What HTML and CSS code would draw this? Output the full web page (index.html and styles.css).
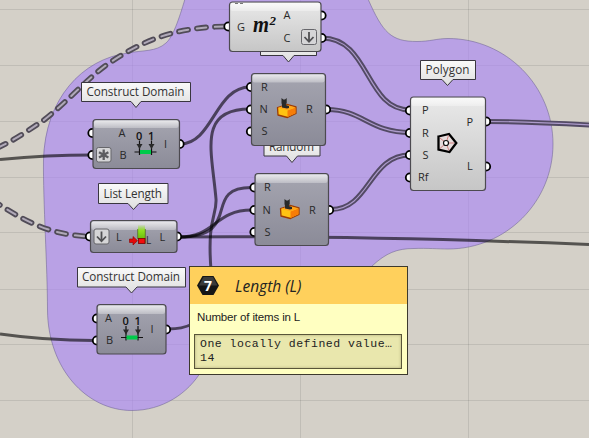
FILE: index.html
```html
<!DOCTYPE html>
<html lang="en">
<head>
<meta charset="utf-8">
<title>Node canvas</title>
<link rel="stylesheet" href="styles.css">
</head>
<body>
<main class="canvas">
<svg class="graph" width="589" height="438" viewBox="0 0 589 438">
  <defs>
    <linearGradient id="dark" x2="0" y2="1">
      <stop offset="0" stop-color="#a5a5b0"/><stop offset="1" stop-color="#8b8b98"/>
    </linearGradient>
    <linearGradient id="light" x2="0" y2="1">
      <stop offset="0" stop-color="#e9e9e9"/><stop offset="1" stop-color="#c6c6c6"/>
    </linearGradient>
    <linearGradient id="shine" x2="0" y2="1">
      <stop offset="0" stop-color="#fff" stop-opacity=".75"/><stop offset="1" stop-color="#fff" stop-opacity=".3"/>
    </linearGradient>
    <linearGradient id="tag" x2="0" y2="1">
      <stop offset="0" stop-color="#fafafa"/><stop offset="1" stop-color="#dedede"/>
    </linearGradient>
    <linearGradient id="bar" x2="0" y2="1">
      <stop offset="0" stop-color="#8fe020" stop-opacity=".1"/><stop offset=".4" stop-color="#8fe020"/><stop offset="1" stop-color="#69bd0c"/>
    </linearGradient>
    <g id="domain">
      <path class="ink" d="M0 21.500H22M5 10V24.500M17 10V24.500"/>
      <rect x="5.500" y="19.500" width="11" height="4" fill="#00cb4a"/>
      <path d="M2 13.500H8L5 18.500ZM14 13.500H20L17 18.500Z"/>
      <text class="digit" x="1.600" y="9">0</text><text class="digit" x="13.600" y="9">1</text>
    </g>
    <g id="dice">
      <path d="M1.500 9.500L11 6.500L20 9V15.500L11.500 19.500L2 17Z" fill="#ffc313" stroke="#9c3b05" stroke-width="1.300" stroke-linejoin="round"/>
      <path d="M11.500 12.500L19.500 9.500V15.200L11.500 18.900Z" fill="#f77d08"/>
      <path d="M2 9.700L11 7L19.500 9.200L11.500 12.200Z" fill="#ffa51a"/>
      <path d="M5.500 0L7.300 1.500H9L10.700 0V5L9.800 7L13 8V10L11 10.500L6 9.500V7L5.500 5Z"/>
    </g>
    <g id="down">
      <rect class="chip" x=".5" y=".5" width="15" height="15" rx="2"/>
      <path class="mark" d="M8 3V12.500M3.500 8L8 12.800L12.500 8"/>
    </g>
  </defs>

  <path class="grid" d="M132.500 0V438M300.500 0V438M468.500 0V438M0 9.500H589M0 65.500H589M0 121.500H589M0 177.500H589M0 232.500H589M0 289.500H589M0 344.500H589M0 400.500H589"/>

  <path class="group" d="M185 -1C179 19 173 37 166 43C156 52 143 50 128 53C82 59 45 99 43.500 160C43 201 47.500 268 47.500 310C48 368 86 410.500 132 410.500C162 410.500 188 394 202 370C228 320 320 320 372 266C386 253 397 248.500 414 248.500C427 248 439 249 448 249C506 249 553 202 553 144C553 86 506 38.500 448 38.500C437 38.500 430 41.500 417 41.500C391 41.500 383 33 368 -1Z"/>

  <g class="chain">
    <path class="chain-out" d="M-3 148C17 139 30 129 44 120C68 101 85 81 105 66C145 38 179 27 226 26.500"/>
    <path class="chain-in" d="M-3 148C17 139 30 129 44 120C68 101 85 81 105 66C145 38 179 27 226 26.500"/>
    <path class="chain-out" d="M-8 200C19 217 45 235 90 236.500"/>
    <path class="chain-in" d="M-8 200C19 217 45 235 90 236.500"/>
  </g>
  <g class="wires">
    <path d="M0 159.500C27 157 58 155 91 155"/>
    <path d="M0 334C28 338 58 340.500 94 340.500"/>
    <path d="M180 144C213 144 215 87 250 87"/>
    <path d="M179 237C245 237 200 187 252 187.500"/>
    <path d="M179 237C216 237 214 210 252 210"/>
    <path d="M179 237C315 236 450 239 589 244.500"/>
    <path d="M250 109C197 109 212 151 216 199C217 216 207 218 211 270"/>
    <path d="M168 329C178 329 184 328 195 323"/>
  </g>
  <g class="double">
    <path class="double-out" d="M322 38C370 38 365 110 410 110"/><path class="double-in" d="M322 38C370 38 365 110 410 110"/>
    <path class="double-out" d="M327 109.500C363 109.500 369 132.500 410 132.500"/><path class="double-in" d="M327 109.500C363 109.500 369 132.500 410 132.500"/>
    <path class="double-out" d="M331 209.500C370 209.500 369 155 410 155"/><path class="double-in" d="M331 209.500C370 209.500 369 155 410 155"/>
    <path class="double-out" d="M487 121.500C525 121.500 553 123 590 125"/><path class="double-in" d="M487 121.500C525 121.500 553 123 590 125"/>
  </g>

  <g class="tags">
    <path d="M81.500 82.500H190.500V101.500H141L136 107.500L131 101.500H81.500Z"/>
    <path d="M98.500 183.500H168V203.500H139L133.500 209.500L128 203.500H98.500Z"/>
    <path d="M77.500 267.500H185.500V287H137L131.500 293L126 287H77.500Z"/>
    <path d="M420.500 60.500H475.500V79.500H453L447.500 85.500L442 79.500H420.500Z"/>
    <path d="M264 136.500H320V156H297.500L292 162.500L286.500 156H264Z"/>
    <path d="M260.500 36.500H316.500V55.500H294L288.500 62L283 55.500H260.500Z"/>
  </g>
  <g class="tag-text">
    <text x="86.500" y="95.500" textLength="98">Construct Domain</text>
    <text x="103.500" y="197.500" textLength="58.500">List Length</text>
    <text x="82" y="281" textLength="98">Construct Domain</text>
    <text x="425.500" y="73.500" textLength="44">Polygon</text>
    <text x="269" y="150.500" textLength="45">Random</text>
  </g>

  <g class="ports">
    <circle cx="228.500" cy="26.500" r="4.200"/><circle cx="321.500" cy="15.500" r="4.200"/><circle cx="321.500" cy="38" r="4.200"/>
    <circle cx="251" cy="87" r="4.200"/><circle cx="251" cy="109.500" r="4.200"/><circle cx="251" cy="131.500" r="4.200"/><circle cx="326" cy="109.500" r="4.200"/>
    <circle cx="254.500" cy="187.500" r="4.200"/><circle cx="254.500" cy="210" r="4.200"/><circle cx="254.500" cy="232" r="4.200"/><circle cx="329" cy="210" r="4.200"/>
    <circle cx="410" cy="110.500" r="4.200"/><circle cx="410" cy="133" r="4.200"/><circle cx="410" cy="155" r="4.200"/><circle cx="410" cy="177.500" r="4.200"/>
    <circle cx="486" cy="121.500" r="4.200"/><circle cx="486" cy="166.500" r="4.200"/>
    <circle cx="92.500" cy="133" r="4.200"/><circle cx="92.500" cy="155" r="4.200"/><circle cx="179.500" cy="144" r="4.200"/>
    <circle cx="90" cy="236.500" r="4.200"/><circle cx="177" cy="236.500" r="4.200"/>
    <circle cx="97" cy="318.500" r="4.200"/><circle cx="97" cy="340.500" r="4.200"/><circle cx="166" cy="329.500" r="4.200"/>
  </g>

  <g class="node light">
    <rect x="229.500" y="2" width="91.500" height="49.500" rx="3"/>
    <rect class="shine" x="230.500" y="3" width="89.500" height="8" rx="2"/>
    <path d="M235 3.500H238M240 3.500H243" stroke="#777"/>
    <text x="237" y="30.500">G</text><text x="283.500" y="19">A</text><text x="283.500" y="41.500">C</text>
    <text class="area" x="253" y="32" textLength="16" lengthAdjust="spacingAndGlyphs">m</text><text class="area power" x="269.500" y="25">2</text>
    <use href="#down" x="301" y="29"/>
  </g>
  <g class="node dark">
    <rect x="251.500" y="73.500" width="74" height="72" rx="3"/>
    <rect class="shine" x="252.500" y="74.500" width="72" height="8" rx="2"/>
    <text x="261" y="90.500">R</text><text x="259.500" y="113">N</text><text x="261.500" y="135">S</text><text x="306" y="113">R</text>
    <use href="#dice" x="276" y="98"/>
  </g>
  <g class="node dark">
    <rect x="255" y="173.500" width="73.500" height="72" rx="3"/>
    <rect class="shine" x="256" y="174.500" width="71.500" height="8.500" rx="2"/>
    <text x="264" y="191">R</text><text x="262.500" y="213.500">N</text><text x="264.500" y="235.500">S</text><text x="309" y="213.500">R</text>
    <use href="#dice" x="279" y="199"/>
  </g>
  <g class="node light">
    <rect x="410.500" y="97" width="75" height="93.500" rx="3"/>
    <rect class="shine" x="411.500" y="98" width="73" height="8" rx="2"/>
    <text x="422" y="114">P</text><text x="422" y="136.500">R</text><text x="422.500" y="158.500">S</text><text x="418" y="181">Rf</text>
    <text x="466.500" y="125.500">P</text><text x="467" y="170">L</text>
    <path d="M438.500 136.500L449 134L456.300 143L449.500 152L438.500 149.500Z" fill="#e6dcdc" stroke="#000" stroke-width="2.300"/>
    <path d="M446 143L440 138M446 143L448.500 135.500M446 143H454M446 143L449 150.500M446 143L440 148.500" stroke="#d08080"/>
    <circle cx="446" cy="143" r="2.500" fill="#fff" stroke="#111" stroke-width="1.200"/>
  </g>
  <g class="node dark">
    <rect x="93" y="119.500" width="86.500" height="49" rx="3"/>
    <rect class="shine" x="94" y="120.500" width="84.500" height="7.500" rx="2"/>
    <text x="118.500" y="136.500">A</text><text x="119.500" y="159">B</text><text x="164" y="147.500">I</text>
    <rect class="chip" x="96.500" y="147.500" width="14.500" height="14.500" rx="2"/>
    <path class="star" d="M103.700 149.500V160M99 152.200L108.400 157.400M108.400 152.200L99 157.400"/>
    <use href="#domain" x="134.500" y="130.500"/>
  </g>
  <g class="node dark">
    <rect x="90.500" y="220.500" width="86.500" height="32" rx="3"/>
    <rect class="shine" x="91.500" y="221.500" width="84.500" height="8.500" rx="2"/>
    <text x="116" y="240.500">L</text><text x="159.500" y="240.500">L</text>
    <use href="#down" x="93.500" y="228.500"/>
    <rect x="138" y="225" width="7" height="14" fill="url(#bar)"/>
    <path d="M137.700 229V239M145.300 229V243.500" stroke="#527015" stroke-width=".8"/>
    <rect x="138.500" y="238.500" width="6.500" height="5" fill="#f20d0d" stroke="#790000" stroke-width=".8"/>
    <path d="M129.500 239H133V236.500L137.500 240.700L133 245V242.500H129.500Z" fill="#e40909" stroke="#8b0000" stroke-width=".6"/>
    <text class="mini" x="146" y="244">L</text>
  </g>
  <g class="node dark">
    <rect x="97" y="304.500" width="69" height="49.500" rx="3"/>
    <rect class="shine" x="98" y="305.500" width="67" height="8.500" rx="2"/>
    <text x="105" y="322">A</text><text x="106" y="344">B</text><text x="150.500" y="333">I</text>
    <use href="#domain" x="121" y="316"/>
  </g>
</svg>

<aside class="tooltip">
  <header class="tooltip-head">
    <svg class="badge" width="23" height="21" viewBox="0 0 23 21">
      <path d="M5.500 1H16.500L22 10.500L16.500 20H5.500L0 10.500Z" fill="#161616"/>
      <path d="M6.500 2H16L20.500 10.500H2Z" fill="#3b3b3b"/>
      <text x="7" y="15.500">7</text>
    </svg>
    <h1 class="tooltip-title">Length (L)</h1>
  </header>
  <p class="tooltip-text">Number of items in L</p>
  <div class="tooltip-value">One locally defined value…<br>14</div>
</aside>
</main>
</body>
</html>
```
FILE: styles.css
```css
* { box-sizing: border-box; }
body { margin: 0; }
.canvas {
  position: relative;
  width: 589px;
  height: 438px;
  overflow: hidden;
  background: #d4d0c8;
  font-family: "Open Sans", "Noto Sans", sans-serif;
}
.graph { display: block; }
.grid { fill: none; stroke: #000; stroke-opacity: .09; }
.group { fill: #aa87f5; fill-opacity: .65; stroke: #6e6293; stroke-opacity: .55; }

.chain, .wires, .double { fill: none; }
.chain { stroke-linecap: round; }
.chain-out { stroke: #514c58; stroke-width: 5.6; stroke-dasharray: 9.4 8.8; }
.chain-in { stroke: #b0a9b8; stroke-width: 2; stroke-dasharray: 9.4 8.8; }
.wires { stroke: #000; stroke-opacity: .6; stroke-width: 3; }
.double-out { stroke: #534a65; stroke-width: 5; }
.double-in { stroke: #ad9bcb; stroke-width: 1.2; }

.tags { fill: url(#tag); stroke: #39363f; stroke-width: 1; }
.tag-text { font-size: 11.7px; fill: #333; }
.ports { fill: #fff; stroke: #000; stroke-width: 1.8; }

.node { font-size: 11px; fill: #292929; }
.node > rect:first-child { stroke: #4c4a50; stroke-width: 1.2; }
.dark > rect:first-child { fill: url(#dark); }
.light > rect:first-child { fill: url(#light); }
.node .shine { fill: url(#shine); }
.node .area { font: italic bold 24px "Liberation Serif", serif; fill: #111; }
.node .power { font-size: 13px; }
.mini { font-size: 10px; }
.digit { font-size: 11px; font-weight: 600; fill: #111; }
.ink { fill: none; stroke: #111; stroke-width: 1.2; }
.chip { fill: #d5d5d7; stroke: #66666b; }
.mark { fill: none; stroke: #505053; stroke-width: 1.8; }
.star { fill: none; stroke: #5c5c60; stroke-width: 2.3; }

.tooltip {
  position: absolute;
  left: 189px;
  top: 266px;
  width: 219px;
  height: 109px;
  border: 1px solid #3c392d;
  background: #ffffc1;
  color: #222;
}
.tooltip-head {
  display: flex;
  align-items: center;
  gap: 15px;
  height: 37px;
  padding: 0 7px;
  background: #ffd05c;
}
.badge text { font-size: 14px; font-weight: 700; fill: #fff; }
.tooltip-title {
  margin: 0;
  font-size: 15.5px;
  line-height: 20px;
  font-style: italic;
  font-weight: 400;
}
.tooltip-text {
  margin: 6px 0 0 7px;
  font: 11.5px/14px "Liberation Sans", sans-serif;
  letter-spacing: -.15px;
}
.tooltip-value {
  height: 35px;
  margin: 10px 5px 0 4px;
  padding: 2px 5px;
  border: 1px solid #595539;
  background: #e9e7ad;
  box-shadow: inset 0 0 3px #a9a676;
  font: 11.5px/14px "Liberation Mono", monospace;
  letter-spacing: .5px;
  white-space: nowrap;
}
```
